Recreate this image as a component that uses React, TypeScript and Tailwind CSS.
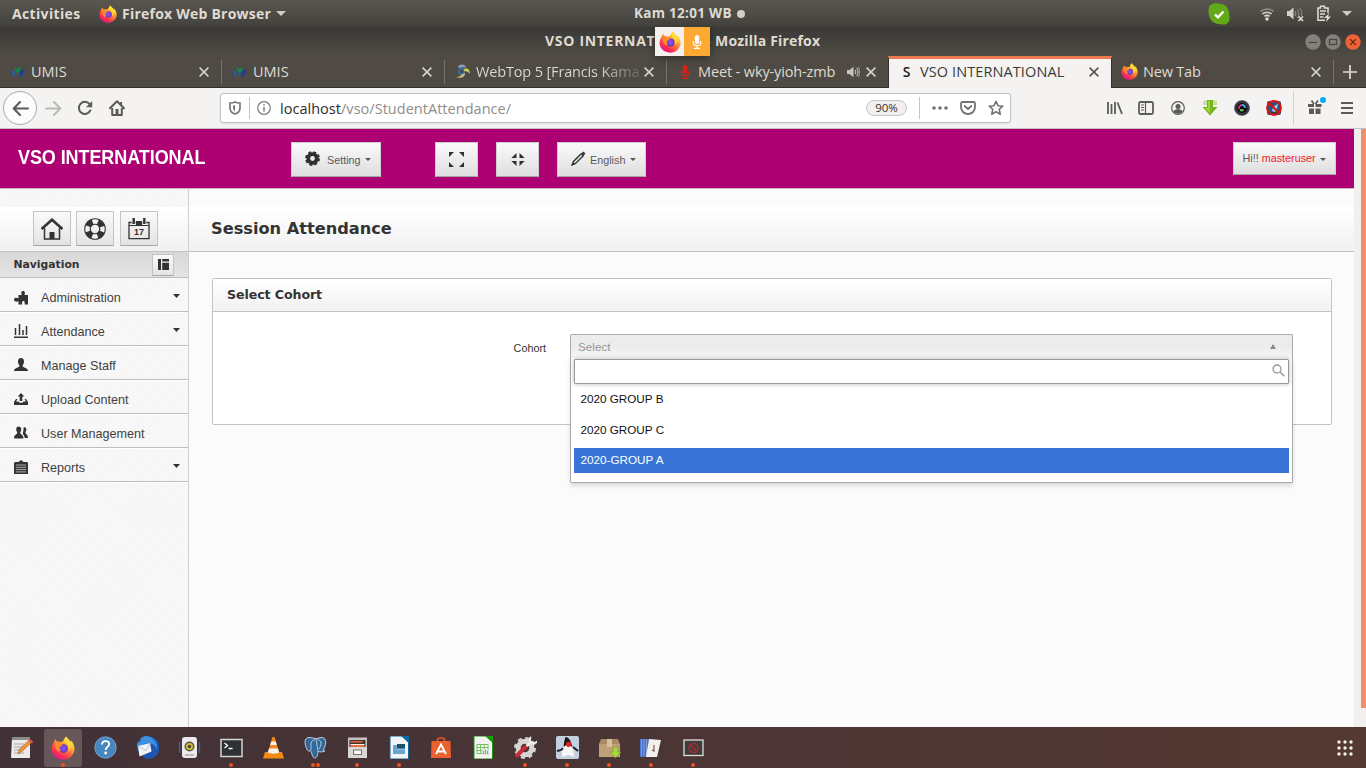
import React from "react";

type Kids = { children?: React.ReactNode };

function Ico({ w, h = w, vb, className = "", children }: Kids & { w: number; h?: number; vb?: string; className?: string }) {
  return (
    <svg width={w} height={h} viewBox={vb ?? `0 0 ${w} ${h}`} fill="none" className={`block shrink-0 ${className}`}>
      {children}
    </svg>
  );
}

function Firefox({ size, id }: { size: number; id: string }) {
  return (
    <Ico w={size} vb="0 0 24 24">
      <defs>
        <linearGradient id={`${id}a`} x1="0.85" y1="0.05" x2="0.25" y2="0.95">
          <stop offset="0" stopColor="#fff44f" />
          <stop offset="0.3" stopColor="#ffb92a" />
          <stop offset="0.55" stopColor="#ff7139" />
          <stop offset="0.8" stopColor="#fb3050" />
          <stop offset="1" stopColor="#e31587" />
        </linearGradient>
        <radialGradient id={`${id}b`}>
          <stop offset="0" stopColor="#9a52f0" />
          <stop offset="0.7" stopColor="#7542d8" />
          <stop offset="1" stopColor="#5b35b0" />
        </radialGradient>
      </defs>
      <path
        d="M15.2 0.5C16 2.4 18.6 4 20 6.2c.2-.5.2-1.2 0-2 2.100 2.300 3.500 5.200 3.500 8.600 0 6-5 10.800-11.400 10.800S.6 19 .6 12.900C.6 9.900 2 7.500 3 5.900c.1-1 .7-2 1.400-2.900.2 1 .7 1.700 1.200 2.300 1.200-.1 2.300.2 3.300.7C9.700 5.600 10.700 5.400 11.900 5.500 12.500 4 13.500 1.800 15.200.5Z"
        fill={`url(#${id}a)`}
      />
      <circle cx="12.600" cy="12.500" r="4.300" fill={`url(#${id}b)`} />
      <path d="M4.400 7.300c3 .6 4.500 1 7.300 1.600-.5 1.300-2.600 1.500-3 2.400-.2 1.200 0 2 .8 2.600 0 1.500-1 2-2 1.600C4.500 14 3.800 10.500 4.400 7.300Z" fill="#ff8a2e" />
      <path d="M15.200.5c-1.700 2-1.800 4.800.6 7 1.800 1.600 2.600 4.200 1.300 7.500 2.800-1.500 4.200-5.200 2.900-8.800C18.600 4 16 2.400 15.200.5Z" fill="#ffdf3a" opacity="0.8" />
    </Ico>
  );
}

function Close({ color = "#d8d5cf" }: { color?: string }) {
  return (
    <Ico w={10}>
      <path d="M0.600.6 9.400 9.400M9.400.6.6 9.400" stroke={color} strokeWidth="1.500" />
    </Ico>
  );
}

function Globe() {
  return (
    <Ico w={14} h={12}>
      <path d="M0.500 3.500 3 5.500 4.500 11 1.500 9Z" fill="#1b62b5" />
      <path d="M3.500 1 6.500 3 10 .5 9 5 6.500 7.500 4.500 5Z" fill="#0f8a48" />
      <path d="M10 4 13.500 3.500 12.500 8 9 11.500 8 7.500Z" fill="#1f3f95" />
      <path d="M5.500 8.500 7.500 8 7 11Z" fill="#1b62b5" />
    </Ico>
  );
}

function Mic({ w, h, color }: { w: number; h: number; color: string }) {
  return (
    <Ico w={w} h={h} vb="0 0 10 14">
      <rect x="2.800" y="0" width="4.400" height="9" rx="2.200" fill={color} />
      <path d="M1.200 6v1.500c0 1.900 1.500 3.200 3.800 3.200s3.800-1.300 3.800-3.200V6M5 10.500v3M2 13.300h6" stroke={color} strokeWidth="1.200" />
    </Ico>
  );
}

function Caret({ className = "" }: { className?: string }) {
  return (
    <Ico w={7} h={4} className={className}>
      <path d="M0 0h7L3.500 4Z" fill="currentColor" />
    </Ico>
  );
}

function TopBar() {
  return (
    <div className="flex h-[27px] items-center bg-linear-to-b from-[#5a5751] to-[#42413c] font-['Open_Sans','Noto_Sans',sans-serif] text-[14px] font-bold text-[#dfdbd2]">
      <div className="flex w-[634px] items-center pl-3">
        <span className="w-[87px] tracking-[0.350px]">Activities</span>
        <Firefox size={18} id="ft" />
        <span className="ml-[5px] w-[150px] tracking-[0.230px] whitespace-nowrap">Firefox Web Browser</span>
        <Ico w={10} h={5} className="ml-[4px]">
          <path d="M0 0h10L5 5Z" fill="#cfcbc4" />
        </Ico>
      </div>
      <div className="flex w-[574px] items-center text-[13.500px]">
        <span className="w-[100px] tracking-[0.300px] whitespace-nowrap">Kam 12:01 WB</span>
        <span className="ml-[3px] size-2 rounded-full bg-[#d2cfc8]" />
      </div>
      <Ico w={22} className="">
        <path d="M6 .5c3-.8 9 .2 12 2.500 3 3 4 9 3.500 13-.3 3.500-2.500 5.500-6 5.500-4.500 0-9-.5-12-4C.5 14 .2 9 .8 5 1.300 2 3 .9 6 .5Z" fill="#62a917" />
        <path d="m7 11.500 3 2.800 5.500-5.800" stroke="#fff" strokeWidth="2.400" />
      </Ico>
      <Ico w={14} h={14} className="ml-[30px]">
        <path d="M0.500 4.500C4 1.300 10 1.300 13.500 4.500" stroke="#8a8781" strokeWidth="1.700" />
        <path d="M2.500 7C5 4.800 9 4.800 11.500 7" stroke="#cdcac4" strokeWidth="1.700" />
        <path d="M4.500 9.400c1.400-1.200 3.600-1.200 5 0" stroke="#dfdbd2" strokeWidth="1.700" />
        <circle cx="7" cy="12" r="1.700" fill="#dfdbd2" />
      </Ico>
      <Ico w={17} h={16} className="ml-[13px]">
        <path d="M0 5h2.500L6.500 1.500v12L2.500 10H0Z" fill="#d5d2cb" />
        <path d="M8 5c1 1.500 1 3.500 0 5M10.300 3.300c1.800 2.500 1.800 6 0 8.500M12.700 2c2.300 3 2.500 6 1.500 8" stroke="#86837d" strokeWidth="1.200" />
        <path d="m11.500 10.500 4.500 4.500m0-4.500L11.500 15" stroke="#dfdbd2" strokeWidth="1.700" />
      </Ico>
      <Ico w={14} h={17} className="ml-[13px]">
        <path d="M8 15.300H1V3h2.500V1.300h4V3H11v5" stroke="#dfdbd2" strokeWidth="1.600" />
        <path d="M3 6h6M3 9h5M3 12h3.500" stroke="#dfdbd2" strokeWidth="1.700" />
        <path d="M12.500 8 7 13h3l-1 4 5-5.500h-3Z" fill="#dfdbd2" />
      </Ico>
      <Ico w={10} h={5} className="ml-[11px]">
        <path d="M0 0h10L5 5Z" fill="#cfcbc4" />
      </Ico>
    </div>
  );
}

function WindowTitle() {
  return (
    <div className="relative flex h-[29px] items-center justify-between bg-linear-to-b from-[#3a3935] to-[#4f4b45] font-['Open_Sans','Noto_Sans',sans-serif] text-[14px] font-bold text-[#dfdbd2]">
      <div className="flex pb-[2px] pl-[545px] whitespace-nowrap">
        <span className="w-[161px] tracking-[0.700px]">VSO INTERNATIONAL</span>
        <span className="w-[9px]">-</span>
        <span className="tracking-[0.190px]">Mozilla Firefox</span>
      </div>
      <div className="flex gap-1 pr-[5px]">
        <Ico w={16}>
          <circle cx="8" cy="8" r="7.700" fill="#84817b" />
          <path d="M4 8.500h8" stroke="#45433e" strokeWidth="1.200" />
        </Ico>
        <Ico w={16}>
          <circle cx="8" cy="8" r="7.700" fill="#84817b" />
          <rect x="4.500" y="5.500" width="7" height="5" stroke="#45433e" strokeWidth="1.200" />
        </Ico>
        <Ico w={16}>
          <circle cx="8" cy="8" r="7.700" fill="#ee6237" />
          <path d="m5.200 5.200 5.600 5.600m0-5.600-5.600 5.600" stroke="#5a2412" strokeWidth="1.200" />
        </Ico>
      </div>
      <div className="absolute top-0 left-[655px] flex h-[29px] w-[55px] shadow-[0_3px_8px_rgba(0,0,0,0.35)]">
        <div className="flex w-[29px] items-center justify-center bg-[#f2f1f0]">
          <Firefox size={22} id="fp" />
        </div>
        <div className="flex flex-1 items-center justify-center bg-[#fea934]">
          <Mic w={10} h={14} color="#fff" />
        </div>
      </div>
    </div>
  );
}

function Tab({ icon, label, extra, active, divider = true, wide }: { icon: React.ReactNode; label: React.ReactNode; extra?: React.ReactNode; active?: boolean; divider?: boolean; wide?: boolean }) {
  return (
    <div
      className={
        active
          ? "-ml-px flex w-[224px] items-center border-x border-t-[3px] border-x-[#33312d] border-t-[#ee7a50] bg-[#f4f3f2] pb-[4px] text-[#3c3b37]"
          : `flex items-center border-b border-[#33312d] text-[#dfdbd2] ${wide ? "w-[223px]" : "w-[222px]"}`
      }
    >
      <div className="ml-[9px] flex w-[17px] justify-center">{icon}</div>
      <div className="ml-[5px] flex-1 whitespace-nowrap">{label}</div>
      {extra}
      <Close color={active ? "#55534f" : "#d8d5cf"} />
      <div className={`h-6 w-px ${active ? "ml-[11px]" : "ml-[12px]"} ${divider ? "bg-[#77746d]" : ""}`} />
    </div>
  );
}

function TabStrip() {
  return (
    <div className="flex h-8 bg-[#4f4b44] font-['Open_Sans','Noto_Sans',sans-serif] text-[14.500px]">
      <Tab icon={<Globe />} label={<span>UMIS</span>} />
      <Tab wide icon={<Globe />} label={<span>UMIS</span>} />
      <Tab
        icon={
          <Ico w={15}>
            <path d="M3 2.500c3-3.500 8-2 8 2C9.500 3 8 3 6 4 5 4.500 3.500 4 3 2.500Z" fill="#8a9db8" />
            <circle cx="6.500" cy="7.300" r="2.800" stroke="#32699a" strokeWidth="2.200" />
            <path d="M8.500 5.500C12 3 15 5 14.800 10c-1.800-2.500-3.300-3-4.800-2.500Z" fill="#d8d44e" />
            <path d="M10 9c.5 4-4 6-9 4 3.500 0 4.500-1 5.500-2.500Z" fill="#cdbb7b" />
          </Ico>
        }
        label={
          <span className="inline-block bg-linear-to-r from-[#dfdbd2] from-75% to-[#6a665f] bg-clip-text tracking-[-0.150px] text-transparent">WebTop 5 [Francis Kama</span>
        }
      />
      <Tab
        icon={<Mic w={10} h={14} color="#dc2015" />}
        label={<span className="tracking-[-0.130px]">Meet - wky-yioh-zmb</span>}
        divider={false}
        extra={
          <Ico w={13} h={12} className="mr-[6px]">
            <path d="M0 4h2.500L6.500.8v10.400L2.500 8H0Z" fill="#c9c5be" />
            <path d="M8 4c1 1 1 3 0 4M9.600 2.200c2 2 2 5.600 0 7.600" stroke="#c9c5be" strokeWidth="1.100" />
            <path d="M11.200.8c2 3 2 7.400 0 10.400" stroke="#a29f98" strokeWidth="1" />
          </Ico>
        }
      />
      <Tab active divider={false} icon={<span className="text-[14px] font-semibold text-[#222]">S</span>} label={<span className="tracking-[0.100px]">VSO INTERNATIONAL</span>} />
      <Tab icon={<Firefox size={17} id="fn" />} label={<span className="tracking-[-0.200px]">New Tab</span>} />
      <div className="flex flex-1 items-center justify-center border-b border-[#33312d]">
        <Ico w={14}>
          <path d="M7 0v14M0 7h14" stroke="#dfdbd2" strokeWidth="1.700" />
        </Ico>
      </div>
    </div>
  );
}

function Toolbar() {
  const g = "#5c5b58";
  return (
    <div className="flex h-[41px] items-center border-b border-[#c3c1bf] bg-[#f4f3f2] font-['Open_Sans','Noto_Sans',sans-serif]">
      <div className="ml-[3px] flex size-[34px] items-center justify-center rounded-full border border-[#a9a8a6] bg-[#fcfcfc]">
        <Ico w={17} h={15}>
          <path d="M8 1 1.700 7.500 8 14M2 7.500h14" stroke={g} strokeWidth="2" strokeLinecap="round" strokeLinejoin="round" />
        </Ico>
      </div>
      <Ico w={17} h={15} className="ml-[8px]">
        <path d="M9 1l6.300 6.500L9 14M15 7.500H1" stroke="#bab9b7" strokeWidth="2" strokeLinecap="round" strokeLinejoin="round" />
      </Ico>
      <Ico w={16} className="ml-[15px]">
        <path d="M13.300 10.500A6 6 0 1 1 12.500 4" stroke={g} strokeWidth="2" strokeLinecap="round" />
        <path d="M15.200 1v6.300H9Z" fill={g} />
      </Ico>
      <Ico w={16} className="ml-[16px]">
        <path d="M1 8.300 8 1.300l7 7" stroke={g} strokeWidth="2" strokeLinecap="round" strokeLinejoin="round" />
        <path d="M3.200 8v7h9.600V8" stroke={g} strokeWidth="2" strokeLinejoin="round" />
        <path d="M6.500 9h3v6h-3ZM11 2h2v3h-2Z" fill={g} />
      </Ico>
      <div className="ml-[95px] flex h-[30px] w-[791px] items-center rounded-[3px] border border-[#c4c2c0] bg-white shadow-[0_1px_2px_rgba(0,0,0,0.08)]">
        <Ico w={12} h={14} className="ml-[8px]">
          <path d="M6 1C4.500 1.800 3 2 1 2v5c0 3 2 5 5 6 3-1 5-3 5-6V2C9 2 7.500 1.800 6 1Z" stroke="#7b7a78" strokeWidth="1.700" />
          <path d="M6 4c-.8.4-1.400.5-2 .5V7c0 1.400.8 2.600 2 3.300Z" fill="#7b7a78" />
        </Ico>
        <div className="ml-[8px] h-[22px] w-px bg-[#c7c5c3]" />
        <Ico w={14} className="ml-[7px]">
          <circle cx="7" cy="7" r="6.300" stroke="#7b7a78" strokeWidth="1.200" />
          <path d="M7 6v4.500M7 3.300v1.500" stroke="#7b7a78" strokeWidth="1.500" />
        </Ico>
        <span className="ml-[9px] w-[586px] pt-px text-[14.500px] tracking-[0.030px] text-[#8e8d8b]">
          <span className="text-[#2e2d2b]">localhost</span>/vso/StudentAttendance/
        </span>
        <div className="flex h-[16px] w-[41px] items-center justify-center rounded-full border border-[#c7c6c4] bg-[#f1f0ef] text-[11.500px] text-[#33322f]">90%</div>
        <div className="ml-[12px] h-[22px] w-px bg-[#c7c5c3]" />
        <Ico w={16} h={4} className="ml-[12px]">
          <circle cx="2" cy="2" r="1.800" fill="#747371" />
          <circle cx="8" cy="2" r="1.800" fill="#747371" />
          <circle cx="14" cy="2" r="1.800" fill="#747371" />
        </Ico>
        <Ico w={16} h={14} className="ml-[12px]">
          <path d="M2.500 1h11c1 0 1.500.5 1.500 1.500V6c0 4-3 7-7 7S1 10 1 6V2.500C1 1.500 1.500 1 2.500 1Z" stroke="#747371" strokeWidth="1.800" />
          <path d="m4.700 5 3.300 3 3.300-3" stroke="#747371" strokeWidth="1.800" strokeLinecap="round" strokeLinejoin="round" />
        </Ico>
        <Ico w={16} className="ml-[12px]">
          <path d="m8 1.300 2 4.400 4.800.5-3.600 3.200 1.100 4.800L8 11.700l-4.300 2.500 1.100-4.800L1.200 6.200 6 5.700Z" stroke="#747371" strokeWidth="1.600" strokeLinejoin="round" />
        </Ico>
      </div>
      <Ico w={16} h={14} className="ml-[96px]">
        <path d="M1 1v12M4.500 3v10M8 1v12M10.500 1.500 15 13" stroke={g} strokeWidth="1.800" />
      </Ico>
      <Ico w={16} h={14} className="ml-[15px]">
        <rect x="1" y="1" width="14" height="12" rx="1.500" stroke={g} strokeWidth="1.800" />
        <path d="M7.500 1v12M3 4h3M3 6.500h3M3 9h3" stroke={g} strokeWidth="1.200" />
      </Ico>
      <Ico w={14} className="ml-[17px]">
        <circle cx="7" cy="7" r="6.300" stroke={g} strokeWidth="1.200" />
        <circle cx="7" cy="5.500" r="2.500" fill={g} />
        <path d="M2.500 10c1-1.200 2.500-1.700 4.500-1.700s3.500.5 4.500 1.700C10.500 11.800 9 12.700 7 12.700S3.500 11.800 2.500 10Z" fill={g} />
      </Ico>
      <Ico w={16} className="ml-[17px]">
        <path d="M5 0h6v7h4.500L8 15.500.5 7H5Z" fill="#74b71b" />
        <path d="M2 1v4M4 0v5M12 0v5M14 1v4" stroke="#9ccb55" strokeWidth="1" />
        <path d="M6 1h2v12L3 8h3Z" fill="#9bd83c" />
      </Ico>
      <Ico w={16} className="ml-[16px]">
        <circle cx="8" cy="8" r="7.600" fill="#33363e" stroke="#5b5f6b" strokeWidth="0.600" />
        <circle cx="8" cy="8" r="4.800" fill="#05060a" />
        <path d="M8 5A3 3 0 0 0 5.200 9" stroke="#e0356b" strokeWidth="2" />
        <path d="M8 5a3 3 0 0 1 3 3" stroke="#38a3e8" strokeWidth="2" />
        <path d="M6 9.500c1 1 2.500 1 3.500 0" stroke="#56d04a" strokeWidth="2" />
      </Ico>
      <Ico w={16} className="ml-[16px]">
        <rect x="1" y="1" width="14" height="14" rx="2" fill="#24557f" />
        <path d="M6 11c.5-4 3-6 6-7-1 4-1 6-3 8Z" fill="#a9cbe2" />
        <path d="M3 12h10v3H3Z" fill="#333d48" />
        <circle cx="8" cy="8" r="6.900" stroke="#e01212" strokeWidth="2" />
        <path d="m3 3 10 10" stroke="#e01212" strokeWidth="2" />
      </Ico>
      <div className="ml-[11px] h-[34px] w-px bg-[#d5d3d1]" />
      <Ico w={20} h={18} className="-mt-1 ml-[13px]">
        <path d="M1 7h6v3H1ZM8.500 7h6v3h-6ZM2 11.500h5V17H2ZM8.500 11.500h5V17h-5Z" fill={g} />
        <path d="M7 7 4.500 3.500M8.500 7 11 3.500" stroke={g} strokeWidth="1.800" />
        <circle cx="16" cy="3" r="3" fill="#00adf3" />
      </Ico>
      <Ico w={12} h={12} className="ml-[14px]">
        <path d="M0 1h12M0 6h12M0 11h12" stroke={g} strokeWidth="1.800" />
      </Ico>
    </div>
  );
}

function Btn({ className = "", children }: Kids & { className?: string }) {
  return (
    <div className={`flex shrink-0 items-center border border-[#cfcfcf] border-b-[#a5a5a5] bg-linear-to-b from-[#fafafa] to-[#dedede] text-[10.800px] text-[#5a5a5a] ${className}`}>
      {children}
    </div>
  );
}

function Header() {
  const d = "#303030";
  return (
    <div className="flex h-[60px] items-start border-b border-[#c9b3c1] bg-[#ad0073]">
      <div className="mt-[16px] ml-[18px] w-[273px] text-[18px] leading-[25px] font-bold tracking-[-0.080px] whitespace-nowrap text-white">
        <span className="inline-block scale-y-[1.120]">VSO INTERNATIONAL</span>
      </div>
      <Btn className="mt-[13px] h-[35px] w-[90px] pl-[13px]">
        <Ico w={15} className="mb-[2px]">
          <circle cx="7.500" cy="7.500" r="4.300" stroke={d} strokeWidth="3.800" />
          <circle cx="7.500" cy="7.500" r="6.400" stroke={d} strokeWidth="2" strokeDasharray="2.900 2.127" />
        </Ico>
        <span className="ml-[7px] w-[38px] pt-[2px]">Setting</span>
        <Ico w={6} h={3}>
          <path d="M0 0h6L3 3Z" fill="#555" />
        </Ico>
      </Btn>
      <Btn className="mt-[13px] ml-[54px] h-[35px] w-[43px] justify-center">
        <Ico w={15}>
          <path d="M0 0h5L0 5ZM15 0v5L10 0ZM0 15v-5l5 5ZM15 15h-5l5-5Z" fill={d} />
        </Ico>
      </Btn>
      <Btn className="mt-[13px] ml-[18px] h-[35px] w-[43px] justify-center">
        <Ico w={14} h={15}>
          <path d="M5.500 1v5H.3ZM8.500 1v5h5.200ZM.3 9h5.200v5ZM13.700 9H8.500v5Z" fill={d} />
        </Ico>
      </Btn>
      <Btn className="mt-[13px] ml-[18px] h-[35px] w-[89px] pl-[13px]">
        <Ico w={15} className="mb-[2px]">
          <path d="M1.300 13.700 2.500 10.500 10.300 2.700l2 2L4.500 12.500Z" stroke={d} strokeWidth="1.400" />
          <path d="M10.700 2.200 12.400.5l2.100 2.100-1.700 1.700ZM.3 14.700l1.300-3.500 2.200 2.200Z" fill={d} />
        </Ico>
        <span className="ml-[4px] w-[40px] pt-[2px]">English</span>
        <Ico w={6} h={3}>
          <path d="M0 0h6L3 3Z" fill="#555" />
        </Ico>
      </Btn>
      <Btn className="mt-[13px] mr-[18px] ml-auto h-[33px] w-[103px] pl-[8.500px]">
        <span className="w-[77.500px]">
          Hi!! <span className="text-[#f5191d]">masteruser</span>
        </span>
        <Ico w={6} h={3} className="mt-[2px]">
          <path d="M0 0h6L3 3Z" fill="#555" />
        </Ico>
      </Btn>
    </div>
  );
}

function SquareBtn({ children }: Kids) {
  return <div className="flex h-[35px] w-[38px] items-center justify-center border border-[#c5c5c5] border-b-[#a5a5a5] bg-linear-to-b from-[#fafafa] to-[#e3e3e3]">{children}</div>;
}

const D = "#333333";

const NAV: { label: string; menu?: boolean; icon: React.ReactNode }[] = [
  { label: "Administration", menu: true, icon: <path d="M4.500 6h3.300c-.8-1.500-.8-4 1.300-4s2.100 2.500 1.300 4H14v9.500h-3.300v-2c0-2-2.600-2-2.600 0v2H4.500v-3.300c-1.400.8-4.500.6-4.500-1.700s3.100-2 4.500-1.200Z" fill={D} /> },
  { label: "Attendance", menu: true, icon: <path d="M0 14.300h14M1.500 12V5M5.500 12V1M9 12V7M12.500 12V3" stroke={D} strokeWidth="1.500" /> },
  { label: "Manage Staff", icon: <path d="M7 1c2.200 0 3.200 1.700 3 4-.1 1.700-1 2.700-1.500 3.500 0 1.500 1.500 1.800 3 2.400 1.500.6 2.500 1.500 2.500 3.100H0c0-1.600 1-2.500 2.500-3.100 1.500-.6 3-.9 3-2.400C5 7.700 4.100 6.700 4 5c-.2-2.300.8-4 3-4Z" fill={D} /> },
  { label: "Upload Content", icon: <path d="M7 2l3.300 3.500H8.300V10H5.700V5.500H3.700ZM3.500 8 2 10.500h2.500c0 1.700 5 1.700 5 0H12L10.500 8H12l2 3v3H0v-3l2-3Z" fill={D} /> },
  {
    label: "User Management",
    icon: (
      <>
        <path d="M4.700 1.500c2 0 2.700 1.500 2.500 3.200-.1 1.300-.7 2-1 2.800 0 2.500 3.300 1.500 3.300 6H0c0-4.500 3.300-3.500 3.300-6-.4-.8-1-1.500-1.100-2.800C2 3 2.700 1.500 4.700 1.500Z" fill={D} />
        <path d="M9.500 2.500c1.900-.7 3 .5 2.800 2.300-.1 1.100-.5 1.700-.9 2.500 0 2.200 2.600 2 2.600 5.700h-3.300c-.2-3-2-3.700-2-4.800.8-1.500.8-3.500.8-5.700Z" fill={D} />
      </>
    ),
  },
  {
    label: "Reports",
    menu: true,
    icon: (
      <>
        <path d="M0.500 4V3h4L7 1l2.500 2h4v1H14v11H0V4Z" fill={D} />
        <path d="M1.800 6h10.400M1.800 8.300h10.400M1.800 10.600h10.400M1.800 12.900h10.400" stroke="#bbb" strokeWidth="0.900" />
      </>
    ),
  },
];

function Sidebar() {
  return (
    <div className="flex w-[189px] flex-col border-r border-[#cfcfcf] bg-[#f9f9f9] bg-[repeating-linear-gradient(45deg,#0000_0_2px,#00000003_2px_3px),repeating-linear-gradient(-45deg,#0000_0_2px,#00000003_2px_3px)] pt-[18px]">
      <div className="flex h-[45px] items-start border-b border-[#c3c3c3] bg-linear-to-b from-white to-[#f1f1f1] pt-1 pl-[33px]">
        <SquareBtn>
          <Ico w={22} h={22}>
            <path d="M0.500 11 11 1.700 21.500 11" stroke={D} strokeWidth="2.600" />
            <path d="M3.500 10v11h15V10" stroke={D} strokeWidth="1.500" />
            <path d="M8.500 14h5v7h-5Z" fill={D} />
          </Ico>
        </SquareBtn>
        <div className="w-[5px]" />
        <SquareBtn>
          <Ico w={22} h={22}>
            <circle cx="11" cy="11" r="7.500" stroke={D} strokeWidth="6.600" />
            <circle cx="11" cy="11" r="7.500" stroke="#f1f1f1" strokeWidth="4.400" strokeDasharray="5.400 6.380" strokeDashoffset="2.700" />
          </Ico>
        </SquareBtn>
        <div className="w-[6px]" />
        <SquareBtn>
          <Ico w={22} h={22}>
            <path d="M1 4.500h20v16.200H1Z" stroke={D} strokeWidth="1.300" />
            <path d="M8 3h6v5H8ZM1 7h20v1H1Z" fill={D} />
            <path d="M5.700 0v5.500M16.300 0v5.500" stroke="#f4f4f4" strokeWidth="4" />
            <path d="M5.700 0v6M16.300 0v6" stroke={D} strokeWidth="2.400" />
            <text x="11" y="17.300" textAnchor="middle" fontSize="9" fontWeight="bold" fill={D} fontFamily="Liberation Sans, sans-serif">17</text>
          </Ico>
        </SquareBtn>
      </div>
      <div className="flex h-[26px] items-center justify-between border-b border-[#bdbdbd] bg-[#dfdfdf] bg-linear-to-b from-[#d8d8d8] to-[#e4e4e4] pr-[14px] pl-[13.500px]">
        <span className="pt-[1px] font-['DejaVu_Sans',sans-serif] text-[10.800px] font-bold text-[#333]">Navigation</span>
        <div className="flex h-[22px] w-[22px] items-center justify-center rounded-[1px] border border-[#c3c3c3] border-b-[#a5a5a5] bg-linear-to-b from-[#fafafa] to-[#e4e4e4]">
          <Ico w={11} h={11}>
            <path d="M0 0h3v11H0ZM4.200 0H11v2.500H4.200ZM4.200 3.700H11V11H4.200Z" fill={D} />
          </Ico>
        </div>
      </div>
      {NAV.map((n) => (
        <div key={n.label} className="flex h-[34px] items-center border-b border-[#bfbfbf] pt-[5px] pr-[8px] pl-[14px] shadow-[0_1px_0_#fff]">
          <Ico w={14} h={16} className="mb-[1px]">{n.icon}</Ico>
          <span className="ml-[13px] flex-1 pt-[2px] text-[12.600px] text-[#414141]">{n.label}</span>
          {n.menu && <Caret className="mb-[2px] text-[#333]" />}
        </div>
      ))}
    </div>
  );
}

function CohortSelect() {
  return (
    <div className="relative h-[25px] w-[723px] text-[11.700px]">
      <div className="flex h-[25px] items-center justify-between rounded-t-[2px] border border-b-0 border-[#aaa] bg-linear-to-b from-[#ececec] from-50% to-[#f8f8f8] pr-[16px] pl-[7px] text-[#999]">
        <span>Select</span>
        <Ico w={6} h={5} className="mb-[1px]">
          <path d="M0 5h6L3 0Z" fill="#888" />
        </Ico>
      </div>
      <div className="absolute top-[24px] left-0 z-10 h-[125px] w-[723px] rounded-b-[2px] border border-t-0 border-[#aaa] bg-white px-[3px] pt-[1px] text-[#111] shadow-[0_3px_4px_rgba(0,0,0,0.13)]">
        <div className="flex h-[25px] items-start justify-end rounded-[1px] border border-[#999] bg-white pt-1 pr-[3px] shadow-[0_0_4px_rgba(0,0,0,0.300)]">
          <Ico w={13} h={13}>
            <circle cx="5" cy="5" r="4" stroke="#999" strokeWidth="1.300" />
            <path d="m8 8 4.300 4.300" stroke="#999" strokeWidth="1.600" />
          </Ico>
        </div>
        <div className="mt-[3px] flex h-[25px] items-center pb-[2px] pl-[6.500px]">2020 GROUP B</div>
        <div className="mt-[6px] flex h-[25px] items-center pb-[2px] pl-[6.500px]">2020 GROUP C</div>
        <div className="mt-[5px] flex h-[25px] items-center bg-[#3875d7] pb-[2px] pl-[6.500px] text-white">2020-GROUP A</div>
      </div>
    </div>
  );
}

function Content() {
  return (
    <div className="flex-1 bg-[#fbfbfb] pt-[18px]">
      <div className="flex h-[45px] items-center border-b border-[#c3c3c3] bg-linear-to-b from-white to-[#f1f1f1] pl-[22px]">
        <h1 className="font-['DejaVu_Sans',sans-serif] text-[16.200px] font-bold text-[#333]">Session Attendance</h1>
      </div>
      <div className="mt-[26px] mr-[22px] ml-[23px] h-[147px] rounded-[2px] border border-[#c3c3c3] bg-white">
        <div className="flex h-[33px] items-center border-b border-[#c3c3c3] bg-linear-to-b from-white to-[#f1f1f1] pl-[14px]">
          <h2 className="font-['DejaVu_Sans',sans-serif] text-[12.600px] font-bold tracking-[-0.080px] text-[#333]">Select Cohort</h2>
        </div>
        <div className="flex pt-[22px]">
          <div className="w-[357px] pt-[5px] pr-[24px] text-right text-[10.800px] leading-[18px] text-[#333]">Cohort</div>
          <CohortSelect />
        </div>
      </div>
    </div>
  );
}

const DOCK: { dots: number; icon: React.ReactNode }[] = [
  {
    dots: 0,
    icon: (
      <>
        <path d="M2 2h18v20H1Z" fill="#ecebea" />
        <path d="M2 1h18v3H2Z" fill="#8b8b89" />
        <path d="M4 8h10M4 11h9M4 14h8M4 17h10" stroke="#a8a8a6" strokeWidth="1" />
        <path d="m8.500 16 1-3L18.500 4.500l2.500 2.500-9 8.500-4 2.500Z" fill="#f0943a" stroke="#8a5a2a" strokeWidth="0.500" />
        <path d="m18 4 2-1 3 2.500-1 2Z" fill="#e35656" />
      </>
    ),
  },
  { dots: 1, icon: null },
  {
    dots: 0,
    icon: (
      <>
        <circle cx="11.500" cy="11.500" r="10.700" fill="#4587be" stroke="#7eb2dd" strokeWidth="0.800" />
        <path d="M8 8.500c0-4.500 7.200-4.300 7.200-.5 0 2.700-3.500 2.800-3.500 6" stroke="#fff" strokeWidth="1.900" />
        <circle cx="11.700" cy="17" r="1.400" fill="#fff" />
      </>
    ),
  },
  {
    dots: 0,
    icon: (
      <>
        <path d="M5 2C11-2 24 1 23.500 12 23 20 16 24 9 22.500L2 15C-1 10 2 6 5 2Z" fill="#1f55ae" />
        <path d="M9 0C17 0 22 6 21 14c-2-6-6-8-13-6L2 12C0 8 1 6 5 5 3 3 6 1 9 0Z" fill="#3f8fe0" />
        <path d="m2 10 12-3 1.500 8.500-12 5Z" fill="#f2f4f7" />
        <path d="m2 10 8 4.500 4-7.500" stroke="#b9c2cc" strokeWidth="1" />
      </>
    ),
  },
  {
    dots: 0,
    icon: (
      <>
        <path d="M1.500 6v11M21.500 6v11" stroke="#47648c" strokeWidth="1.300" />
        <rect x="4" y="1" width="15" height="21" rx="3" fill="#ecebea" />
        <circle cx="11.500" cy="10.500" r="5" fill="#5a5a55" />
        <circle cx="11.500" cy="10.500" r="3.500" fill="#d9bf26" />
        <circle cx="11.500" cy="10.500" r="1.700" fill="#444" />
        <path d="M7 19h9" stroke="#bbb" strokeWidth="2" />
      </>
    ),
  },
  {
    dots: 1,
    icon: (
      <>
        <rect x="1" y="3.500" width="21" height="17" fill="#2e3133" stroke="#d5d5d3" strokeWidth="1.500" />
        <path d="m4.500 7 3 2.500-3 2.500M8.500 12.500h4" stroke="#fff" strokeWidth="1.300" />
      </>
    ),
  },
  {
    dots: 0,
    icon: (
      <>
        <path d="M3 16h17l2 6.500H1Z" fill="#f28a0f" />
        <path d="M10.500 1h2L18 19c-3 2-10 2-13 0Z" fill="#ef8a1b" />
        <path d="m9.200 5.500-1 3.500h6.600l-1-3.500ZM7 12.500l-1.200 4c3 1.500 8.400 1.500 11.400 0l-1.200-4Z" fill="#f4f2ef" />
      </>
    ),
  },
  {
    dots: 2,
    icon: (
      <>
        <path d="M5 1.500c-4 0-4.500 4-3.500 8C3 15 5 16 6.500 14.500 8 17 8.500 22 10.500 22c3 0 3.500-4 3.500-7 2 1.500 5 1 7 0l-2-1c3-4 4.500-12-1-12.500-3 0-4 1-6 1S8 1.500 5 1.500Z" fill="#32699b" stroke="#c4d0da" strokeWidth="1" />
        <path d="M7 14V7c1-3 4-4 5-2.500 1-1.500 5-1 5 2.500 0 3-1 4-2 6M14 15c-.5-3-1-5-1.500-10" stroke="#c4d0da" strokeWidth="0.900" />
      </>
    ),
  },
  {
    dots: 1,
    icon: (
      <>
        <path d="M2 1.500h19V22H2Z" fill="#c6c3be" />
        <path d="M3.500 4h16v7h-16Z" fill="#403733" />
        <path d="M4.500 5h12v1.500h-12Z" fill="#ed6335" />
        <path d="M4.500 8h14v1h-14Z" fill="#f4f0ec" />
        <path d="M4.500 9h14v2h-14Z" fill="#ec6c3f" />
        <path d="M2 11h19v11H2Z" fill="#d9d7d3" />
        <rect x="7.500" y="14" width="8" height="4.500" fill="#f8f8f8" stroke="#77736e" strokeWidth="1" />
      </>
    ),
  },
  {
    dots: 1,
    icon: (
      <>
        <path d="M2 0h12l6.500 6.500V23H2Z" fill="#f3f4f5" stroke="#0f659c" strokeWidth="1" />
        <path d="M13 0h8v7Z" fill="#0869a3" />
        <path d="M5 9h12v9H5Z" fill="#6aa7cf" />
        <path d="M9 8h8v5H9Z" fill="#1f5069" />
        <path d="M9 12.500h8v1.500H9Z" fill="#8cc3df" />
      </>
    ),
  },
  {
    dots: 0,
    icon: (
      <>
        <path d="M7.500 8V3.500c0-2 7-2 7 0V8" stroke="#cc5226" strokeWidth="2" />
        <path d="M1.500 5h19l.5 17H1Z" fill="#e9622d" />
        <path d="m6 18 5-9.500 5 9.500M7 15.500h8" stroke="#fff" strokeWidth="1.800" />
      </>
    ),
  },
  {
    dots: 0,
    icon: (
      <>
        <path d="M2 0h12l6.500 6.500V23H2Z" fill="#f3f4f2" stroke="#259115" strokeWidth="1" />
        <path d="M13 0h8v7Z" fill="#1c9a0b" />
        <path d="M5 8.500h11v9H5Z" fill="#fff" stroke="#73bd61" />
        <path d="M5 11.500h11M5 14.500h11M8.700 8.500v9M12.300 8.500v9" stroke="#73bd61" />
        <path d="M10 13h7v6h-7Z" fill="#d6e4dc" />
        <path d="M11.500 18v-3M13.500 18v-4M15.500 18v-3" stroke="#e08a2e" />
      </>
    ),
  },
  {
    dots: 1,
    icon: (
      <>
        <circle cx="11" cy="12" r="6.800" stroke="#d6d5d2" strokeWidth="5" />
        <circle cx="11" cy="12" r="9.800" stroke="#d6d5d2" strokeWidth="2.400" strokeDasharray="4 3.700" />
        <path d="m3 19.500 8.500-8.500" stroke="#c82d33" strokeWidth="4" strokeLinecap="round" />
        <path d="m12.500 10 5-4.500" stroke="#eeeeec" strokeWidth="2.500" />
        <path d="M17 1c-2 2-1 6 2 6 2 .5 3.500-.5 4-2" stroke="#eeeeec" strokeWidth="2" />
      </>
    ),
  },
  {
    dots: 1,
    icon: (
      <>
        <rect x="0" y="0" width="23" height="23" rx="2" fill="#c3d1df" />
        <path d="M10 1c4 1 8 14 8 19-2 2-3-1-6-1s-4 3-6 1c0-6 1-15 4-19Z" fill="#f6f6f5" />
        <path d="M9.500 1c4 0 6 6 7 10l-5-3-4 3c0-4 1-7 2-10Z" fill="#17191c" />
        <path d="M1 15c3-1 4 0 6-3M17 11l5 4" stroke="#20242a" strokeWidth="2" />
        <circle cx="12.500" cy="8.300" r="2.600" fill="#e02424" />
      </>
    ),
  },
  {
    dots: 1,
    icon: (
      <>
        <path d="M3 3h17l2 5H1Z" fill="#a98a66" />
        <path d="M1 8h21v13H1Z" fill="#c0a078" />
        <path d="M9 3h5v8H9Z" fill="#d7c09b" />
        <path d="M15 11h5v5h3l-5.500 6-5.500-6h3Z" fill="#a4d93c" stroke="#6f9c1e" strokeWidth="0.600" />
      </>
    ),
  },
  {
    dots: 1,
    icon: (
      <>
        <path d="M0 3h9L7 21H0Z" fill="#4b72c8" />
        <path d="M1.500 3v17M4 3v17M6.500 3v17" stroke="#98b1e3" strokeWidth="0.700" />
        <path d="m9 3 12 1-4 17H6Z" fill="#f2f1ef" />
        <path d="M14 9v6l-2-1" stroke="#7b4a3e" strokeWidth="1.100" />
      </>
    ),
  },
  {
    dots: 1,
    icon: (
      <>
        <rect x="2" y="4" width="19" height="15.500" fill="#3d3d3e" stroke="#e0dfdd" strokeWidth="1.300" />
        <circle cx="11.500" cy="12" r="4.500" stroke="#b2262b" strokeWidth="1.600" />
        <path d="m8.500 9 6 6" stroke="#b2262b" strokeWidth="1.600" />
      </>
    ),
  },
];

function Dock() {
  return (
    <div className="flex h-[41px] bg-linear-to-r from-[#423137] to-[#543932] pt-[2px]">
      {DOCK.map((d, i) => (
        <div key={i} className="flex h-[39px] w-[42px] justify-center">
          <div className={`flex h-[38px] w-[38px] flex-col items-center rounded-[3px] ${i === 1 ? "bg-[#675759]" : ""}`}>
            <div className="mt-[7px] h-[24px]">{d.icon ? <Ico w={23} h={23}>{d.icon}</Ico> : <Firefox size={24} id="fd" />}</div>
            <div className="mt-[3px] flex gap-[1px]">
              {Array.from({ length: d.dots }, (_, k) => (
                <span key={k} className="size-[4px] rounded-full bg-[#e9541f]" />
              ))}
            </div>
          </div>
        </div>
      ))}
      <Ico w={16} className="mt-[11px] mr-[13px] ml-auto">
        {Array.from({ length: 9 }, (_, k) => (
          <circle key={k} cx={2 + (k % 3) * 6} cy={2 + Math.floor(k / 3) * 6} r="1.700" fill="#f3efed" />
        ))}
      </Ico>
    </div>
  );
}

export default function App() {
  return (
    <div className="flex h-[768px] w-[1366px] flex-col overflow-hidden font-['Liberation_Sans',Arial,sans-serif]">
      <TopBar />
      <WindowTitle />
      <TabStrip />
      <Toolbar />
      <div className="flex h-[598px]">
        <div className="flex w-[1354px] flex-col bg-white">
          <Header />
          <div className="flex flex-1">
            <Sidebar />
            <Content />
          </div>
        </div>
        <div className="flex w-3 justify-end bg-[#f1f0ee]">
          <div className="h-[579px] w-[5px] bg-[#f28f69]" />
        </div>
      </div>
      <Dock />
    </div>
  );
}
